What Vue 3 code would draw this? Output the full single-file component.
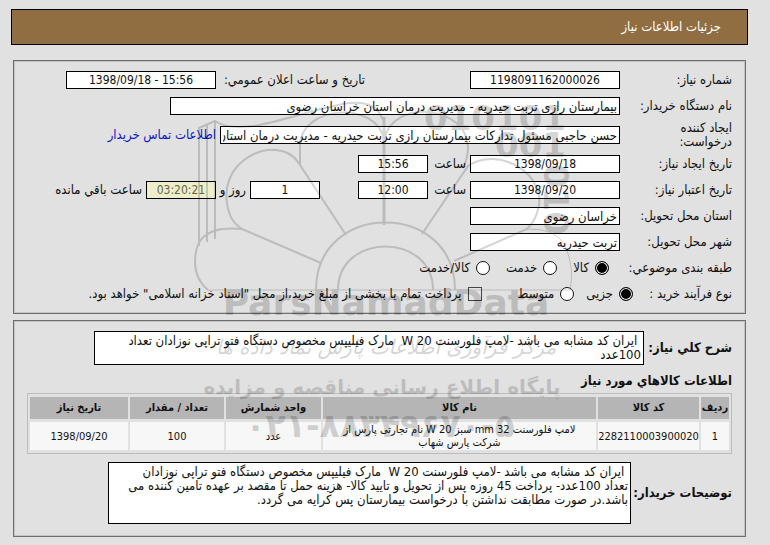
<template>
  <div class="page" dir="rtl">
    <header class="title-bar">جزئیات اطلاعات نیاز</header>

    <section class="panel">
      <div class="row">
        <label class="lbl" for="need-no">شماره نیاز:</label>
        <input id="need-no" class="box w-150 center" value="1198091162000026" readonly />
        <label class="lbl-announce" for="announce">تاریخ و ساعت اعلان عمومي:</label>
        <input id="announce" class="box w-150 center" dir="ltr" value="1398/09/18 - 15:56" readonly />
      </div>
      <div class="row">
        <label class="lbl" for="buyer">نام دستگاه خریدار:</label>
        <input id="buyer" class="box w-450" value="بیمارستان رازی تربت حیدریه - مدیریت درمان استان خراسان رضوی" readonly />
      </div>
      <div class="row tall">
        <label class="lbl narrow" for="creator"><span>ایجاد کننده درخواست:</span></label>
        <input id="creator" class="box w-400" value="حسن حاجبی مسئول تدارکات بیمارستان رازی تربت حیدریه - مدیریت درمان استان" readonly />
        <a class="contact" href="#">اطلاعات تماس خریدار</a>
      </div>
      <div class="row">
        <label class="lbl" for="c-date">تاریخ ایجاد نیاز:</label>
        <input id="c-date" class="box w-150 center" dir="ltr" value="1398/09/18" readonly />
        <label class="lbl-hour" for="c-hour">ساعت</label>
        <input id="c-hour" class="box w-70 center" value="15:56" readonly />
      </div>
      <div class="row">
        <label class="lbl" for="e-date">تاریخ اعتبار نیاز:</label>
        <input id="e-date" class="box w-150 center" dir="ltr" value="1398/09/20" readonly />
        <label class="lbl-hour" for="e-hour">ساعت</label>
        <input id="e-hour" class="box w-70 center" value="12:00" readonly />
        <input id="days" class="box w-70 center days" value="1" readonly />
        <label class="lbl-days" for="days">روز و</label>
        <input id="remain" class="box w-70 center remain" value="03:20:21" readonly />
        <label class="lbl-remain" for="remain">ساعت باقي مانده</label>
      </div>
      <div class="row">
        <label class="lbl" for="province">استان محل تحویل:</label>
        <input id="province" class="box w-150" value="خراسان رضوی" readonly />
      </div>
      <div class="row">
        <label class="lbl" for="city">شهر محل تحویل:</label>
        <input id="city" class="box w-150" value="تربت حیدریه" readonly />
      </div>
      <div class="row">
        <span class="lbl subject">طبقه بندی موضوعي:</span>
        <label v-for="s in subjects" :key="s" class="choice wide">
          <input v-model="subject" type="radio" name="subject" :value="s" />{{ s }}
        </label>
      </div>
      <div class="row">
        <span class="lbl process">نوع فرآیند خرید :</span>
        <label v-for="p in processes" :key="p" class="choice">
          <input v-model="process" type="radio" name="process" :value="p" />{{ p }}
        </label>
        <label class="choice treasury">
          <input v-model="treasury" type="checkbox" />پرداخت تمام یا بخشی از مبلغ خرید،از محل "اسناد خزانه اسلامی" خواهد بود.
        </label>
      </div>
    </section>

    <section class="panel second">
      <div class="area-row">
        <label class="bold" for="summary">شرح کلي نیاز:</label>
        <textarea id="summary" class="area summary" readonly :value="summary"></textarea>
      </div>
      <h2 class="bold heading">اطلاعات کالاهاي مورد نیاز</h2>
      <table class="goods">
        <thead>
          <tr>
            <th class="c-row">ردیف</th>
            <th class="c-code">کد کالا</th>
            <th>نام کالا</th>
            <th class="c-unit">واحد شمارش</th>
            <th class="c-qty">تعداد / مقدار</th>
            <th class="c-date">تاریخ نیاز</th>
          </tr>
        </thead>
        <tbody>
          <tr v-for="g in goods" :key="g.code">
            <td>{{ g.row }}</td>
            <td>{{ g.code }}</td>
            <td class="name">{{ g.name }}</td>
            <td>{{ g.unit }}</td>
            <td>{{ g.qty }}</td>
            <td>{{ g.date }}</td>
          </tr>
        </tbody>
      </table>
      <div class="area-row notes-row">
        <label class="bold" for="notes">توضیحات خریدار:</label>
        <textarea id="notes" class="area notes" readonly :value="notes"></textarea>
      </div>
    </section>

    <svg class="watermark" viewBox="0 0 400 370" width="400" height="370" direction="ltr" aria-hidden="true">
      <g fill="none" stroke="#000" stroke-width="2">
        <path d="M19 156V38L35 31V149M27 152V35M35 31C60 48 110 25 150 17Q194 4 203 30" />
        <path d="M204 27V135" stroke-width="3" />
        <path d="M120 74V56C120 15 198 10 204 50M204 50C212 8 288 15 288 58Q288 68 283 78" />
        <path d="M166 145L118 72C98 42 30 70 50 125Q53 133 62 139L141 173" />
        <path d="M242 144L288 76C318 55 368 84 358 120Q355 131 347 139L274 171" />
        <path d="M28 200H390Q395 180 385 155Q375 138 347 139" stroke-width="1" />
        <path d="M62 139C20 135 15 155 15 172Q15 189 28 200" />
        <path d="M136 200C136 110 275 110 275 200M158 200C158 142 253 142 253 200" />
      </g>
      <g class="wm-latin">
        <text x="386" y="40" text-anchor="end">010101</text>
        <text x="386" y="67" text-anchor="end">001</text>
        <text transform="translate(364 74) rotate(90)">010</text>
        <text class="brand" x="206" y="225" text-anchor="middle">ParsNamadData</text>
      </g>
      <g class="wm-farsi" text-anchor="middle">
        <text class="slogan" x="206" y="264" direction="rtl">مرکز فرآوری اطلاعات پارس نماد داده ها</text>
        <text class="site" x="202" y="304" direction="rtl">پایگاه اطلاع رسانی مناقصه و مزایده</text>
        <text class="phone" x="200" y="347">۰۲۱-۸۸۳۴۹۶۷۰-۵</text>
      </g>
    </svg>
  </div>
</template>

<script setup>
import { ref } from 'vue';

const subjects = ['کالا', 'خدمت', 'کالا/خدمت'];
const processes = ['جزیی', 'متوسط'];

const subject = ref('کالا');
const process = ref('جزیی');
const treasury = ref(false);

const summary = ref(' ایران کد مشابه می باشد -لامپ فلورسنت 20 W  مارک فیلیپس مخصوص دستگاه فتو تراپی نوزادان تعداد\n100عدد');
const notes = ref(' ایران کد مشابه می باشد -لامپ فلورسنت 20 W  مارک فیلیپس مخصوص دستگاه فتو تراپی نوزادان\nتعداد 100عدد- پرداخت 45 روزه پس از تحویل و تایید کالا- هزینه حمل تا مقصد بر عهده تامین کننده می\nباشد.در صورت مطابقت نداشتن با درخواست بیمارستان پس کرایه می گردد.');

const goods = ref([
  {
    row: 1,
    code: '2282110003900020',
    name: 'لامپ فلورسنت 32 mm سبز 20 W نام تجارتی پارس از شرکت پارس شهاب',
    unit: 'عدد',
    qty: 100,
    date: '1398/09/20'
  }
]);
</script>

<style>
body { margin:0; background:#e1e1e1; }
</style>

<style scoped>
.page { position:relative; padding:9px 22px 8px 11px; font-family:"DejaVu Sans Condensed", "DejaVu Sans", sans-serif; font-size:13px; line-height:14px; color:#111; }
.page * { box-sizing:border-box; }

.title-bar { display:flex; align-items:center; height:36px; padding:0 26px; background:#906e42; border:1px solid #000; color:#fff; }

.panel { margin:15px 2px 0; padding:6px 13px; border:1px solid #6e6e6e; box-shadow:inset 0 0 0 1px #c4c4c4; }
.panel.second { margin-top:6px; padding-top:10px; }

.row { display:flex; align-items:center; height:26px; white-space:nowrap; }
.row.tall { height:32px; }
.lbl { flex:none; width:112px; }
.lbl.narrow { white-space:normal; }
.lbl.narrow span { display:block; width:75px; }
.lbl.subject { width:123px; }
.lbl.process { width:99px; }
.lbl-announce { width:149px; margin-right:105px; }
.lbl-hour { width:42px; padding-right:4px; }
.lbl-days { width:34px; padding-right:4px; }
.lbl-remain, .contact { margin-right:4px; }
.contact { color:#1414c8; text-decoration:none; }

.box { height:18px; padding:0 2px; border:1px solid #000; border-radius:0; background:#fff; color:#111; font-family:inherit; font-size:13px; outline:none; }
.w-70 { width:70px; }
.w-150 { width:150px; }
.w-400 { width:400px; }
.w-450 { width:450px; }
.center { font-size:12px; text-align:center; }
.days { margin-right:38px; }
.remain { background:#eeeecb; color:#666644; }

.choice { display:flex; align-items:center; gap:6px; margin-left:12px; }
.choice.wide { margin-left:16px; }
.choice input { appearance:none; flex:none; width:14px; height:14px; margin:0; border:1px solid #111; background:#fff; }
.choice input[type="radio"] { border-radius:50%; }
.choice input[type="radio"]:checked { background:#000; box-shadow:inset 0 0 0 1px #fff; }
.choice input[type="checkbox"] { background:#e6e6e6; border-color:#444; }
.treasury { margin-right:24px; margin-left:0; }

.bold { font-size:13px; font-weight:bold; }
.area-row { display:flex; align-items:center; gap:4px; }
.area { resize:none; overflow:hidden; margin:0; padding:2px; border:1px solid #000; background:#fff; color:#111; font-family:inherit; font-size:13px; line-height:14px; outline:none; white-space:pre-wrap; }
.area-row label { flex:none; width:84px; white-space:nowrap; }
.summary { width:550px; height:34px; }
.heading { margin:8px 0 4px; line-height:16px; }
.notes-row { margin-top:8px; padding-bottom:6px; }
.notes-row label { width:97px; }
.notes { width:523px; height:62px; }

.goods { width:100%; table-layout:fixed; border:1px solid #bcbcbc; border-collapse:separate; border-spacing:2px 3px; font-size:11px; text-align:center; }
.goods th { height:22px; padding:0; background:#b5b5b5; font-size:11px; }
.goods td { height:28px; padding:0; background:#f7f7f7; line-height:13px; }
.goods .name { padding:0 12px; }
.c-row { width:28px; }
.c-code { width:101px; }
.c-unit { width:95px; }
.c-qty { width:94px; }
.c-date { width:98px; }

.watermark { position:absolute; top:90px; left:180px; opacity:.16; pointer-events:none; }
.wm-latin { font-family:"DejaVu Sans", sans-serif; font-size:34px; font-weight:bold; }
.brand { font-size:36px; }
.wm-farsi { font-family:"DejaVu Sans", sans-serif; font-weight:bold; }
.slogan { font-size:20px; font-style:italic; font-weight:normal; }
.site { font-size:20px; }
.phone { font-size:33px; direction:ltr; unicode-bidi:bidi-override; }
</style>
